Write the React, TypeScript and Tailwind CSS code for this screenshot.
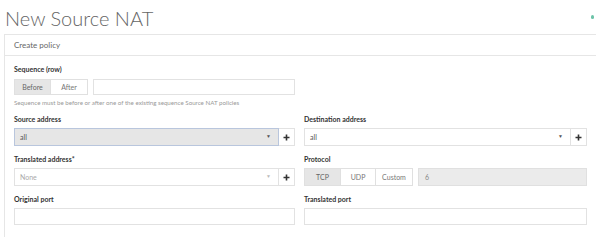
import React from "react";

const font = { fontFamily: "Lato, 'Open Sans', sans-serif" };

function Label({ children }: { children: React.ReactNode }) {
  return (
    <div className="h-[9px] text-[7px] font-bold leading-[9px] text-[#333]">
      {children}
    </div>
  );
}

function Select({
  value,
  active,
  placeholder,
}: {
  value: string;
  active?: boolean;
  placeholder?: boolean;
}) {
  return (
    <div className="flex h-[18px]">
      <div
        className={
          active
            ? "flex flex-1 items-center justify-between border border-[#b9c6dd] bg-[#e6e6e6] pl-[5px] pr-[7px]"
            : "flex flex-1 items-center justify-between border border-[#e2e2e2] bg-white pl-[5px] pr-[7px]"
        }
      >
        <span
          className={
            placeholder
              ? "text-[7px] text-[#aaa]"
              : "text-[7px] text-[#555]"
          }
        >
          {value}
        </span>
        <span
          className={
            placeholder ? "text-[5px] text-[#bbb]" : "text-[5px] text-[#555]"
          }
        >
          ▼
        </span>
      </div>
      <div className="flex w-[16px] items-center justify-center border border-l-0 border-[#e2e2e2] bg-white">
        <svg width="7" height="7" viewBox="0 0 7 7">
          <path d="M3.5 0.5v6M0.5 3.5h6" stroke="#333" strokeWidth="1.6" />
        </svg>
      </div>
    </div>
  );
}

function Segment({
  items,
  widths,
  height,
}: {
  items: string[];
  widths: string[];
  height: string;
}) {
  return (
    <div className={"flex " + height}>
      {items.map((it, i) => (
        <div
          key={it}
          className={
            (i === 0
              ? "bg-[#e6e6e6] text-[#666] "
              : "border-l-0 bg-white text-[#777] ") +
            "flex items-center justify-center border border-[#e0e0e0] text-[7px] " +
            widths[i]
          }
        >
          {it}
        </div>
      ))}
    </div>
  );
}

export default function App() {
  return (
    <div className="relative h-[240px] w-[596px] overflow-hidden bg-white" style={font}>
      <div className="pl-[5px] pt-[6px] text-[20px] font-light leading-[24px] text-[#666]">
        New Source NAT
      </div>
      <div className="absolute right-[2px] top-[15px] h-[4px] w-[3px] rounded-full bg-[#6cc3a8]" />
      <div className="ml-[4px] mt-[4px] border-l border-t border-[#e6e6e6]">
        <div className="flex h-[21px] items-center border-b border-[#e6e6e6] pl-[9px] text-[8px] text-[#666]">
          Create policy
        </div>
        <div className="pb-[12px] pl-[9px] pt-[9px]">
          <Label>Sequence (row)</Label>
          <div className="mt-[5px] flex w-[281px] gap-[5px]">
            <Segment
              items={["Before", "After"]}
              widths={["w-[37px]", "w-[37px]"]}
              height="h-[16px]"
            />
            <div className="h-[16px] flex-1 border border-[#e2e2e2]" />
          </div>
          <div className="mt-[3px] text-[6.2px] leading-[9px] text-[#999]">
            Sequence must be before or after one of the existing sequence Source NAT policies
          </div>
          <div className="mt-[8px] grid grid-cols-[281px_283px] gap-x-[9px]">
            <div>
              <Label>Source address</Label>
              <div className="mt-[4px]">
                <Select value="all" active />
              </div>
            </div>
            <div>
              <Label>Destination address</Label>
              <div className="mt-[4px]">
                <Select value="all" />
              </div>
            </div>
            <div className="mt-[9px]">
              <Label>Translated address*</Label>
              <div className="mt-[4px]">
                <Select value="None" placeholder />
              </div>
            </div>
            <div className="mt-[9px]">
              <Label>Protocol</Label>
              <div className="mt-[4px] flex gap-[5px]">
                <Segment
                  items={["TCP", "UDP", "Custom"]}
                  widths={["w-[37px]", "w-[35px]", "w-[37px]"]}
                  height="h-[18px]"
                />
                <div className="flex h-[18px] flex-1 items-center border border-[#e0e0e0] bg-[#ebebeb] pl-[6px] text-[7px] text-[#888]">
                  6
                </div>
              </div>
            </div>
            <div className="mt-[9px]">
              <Label>Original port</Label>
              <div className="mt-[4px] h-[17px] border border-[#e2e2e2]" />
            </div>
            <div className="mt-[9px]">
              <Label>Translated port</Label>
              <div className="mt-[4px] h-[17px] border border-[#e2e2e2]" />
            </div>
          </div>
        </div>
      </div>
    </div>
  );
}
